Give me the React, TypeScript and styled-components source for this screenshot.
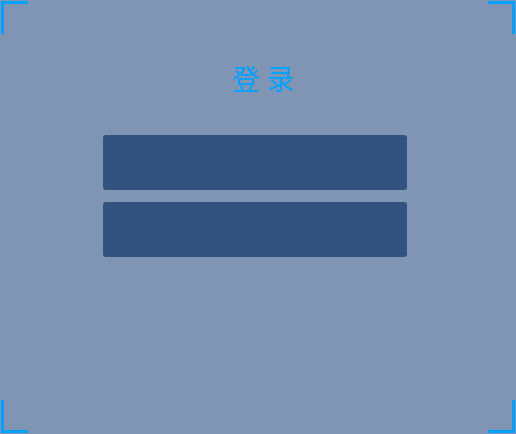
import React from "react";
import styled, { createGlobalStyle } from "styled-components";

const Global = createGlobalStyle`
  html, body { margin: 0; padding: 0; }
  body { background: #8094b3; font-family: "Noto Sans CJK SC", "Noto Sans", sans-serif; }
`;

const Page = styled.div`
  position: relative;
  width: 516px;
  height: 434px;
  box-sizing: border-box;
  background: #8094b3;
  display: flex;
  flex-direction: column;
  align-items: flex-start;
  padding: 58px 0 0 103px;
`;

const Corner = styled.div<{ $v: "top" | "bottom"; $h: "left" | "right" }>`
  position: absolute;
  width: 27px;
  height: 33px;
  box-sizing: border-box;
  ${(p) => p.$v}: 1px;
  ${(p) => p.$h}: 1px;
  border-${(p) => p.$v}: 3px solid #00a2ff;
  border-${(p) => p.$h}: 3px solid #00a2ff;
`;

const Title = styled.h1`
  margin: 0;
  width: 320px;
  text-align: center;
  font-size: 28px;
  font-weight: 400;
  line-height: 40px;
  color: #00a2ff;
  letter-spacing: 0;
  white-space: pre;
`;

const Form = styled.div`
  margin-top: 37px;
  display: flex;
  flex-direction: column;
  gap: 12px;
`;

const Input = styled.input`
  width: 304px;
  height: 55px;
  box-sizing: border-box;
  border: none;
  border-radius: 3px;
  background: #32527f;
  color: #fff;
  padding: 0 12px;
  font-size: 16px;
  outline: none;
`;

export default function App() {
  return (
    <>
      <Global />
      <Page>
        <Corner $v="top" $h="left" />
        <Corner $v="top" $h="right" />
        <Corner $v="bottom" $h="left" />
        <Corner $v="bottom" $h="right" />
        <Title>{"登 录"}</Title>
        <Form>
          <Input type="text" />
          <Input type="password" />
        </Form>
      </Page>
    </>
  );
}
